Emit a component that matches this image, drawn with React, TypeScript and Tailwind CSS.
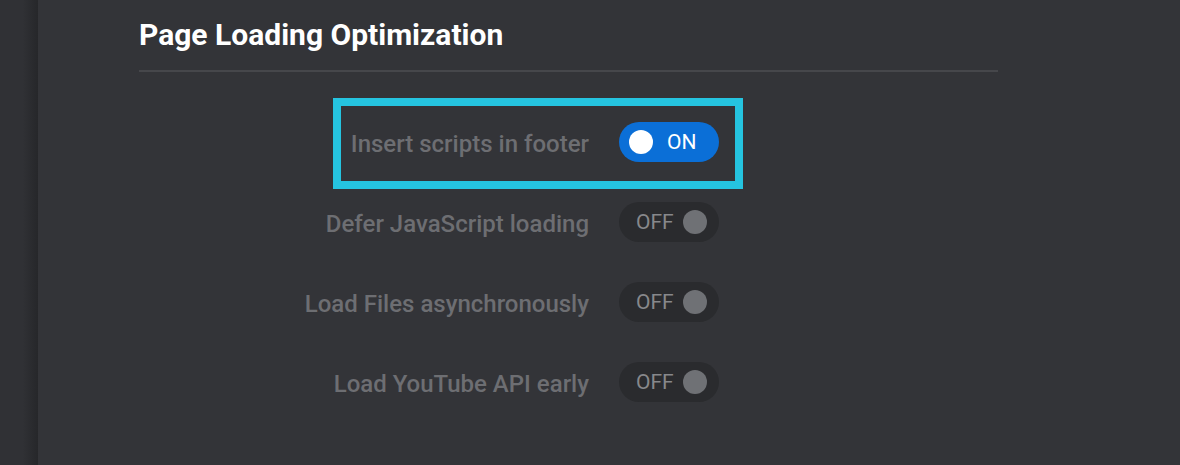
import React from "react";

function Toggle({ on }: { on: boolean }) {
  if (on) {
    return (
      <div className="flex h-[40px] w-[100px] shrink-0 items-center rounded-full bg-[#0b6fd7] pl-[10px]">
        <span className="h-[24px] w-[24px] rounded-full bg-white" />
        <span className="ml-[14px] mt-[1px] text-[21px] leading-none text-white">ON</span>
      </div>
    );
  }
  return (
    <div className="flex h-[40px] w-[100px] shrink-0 items-center rounded-full bg-[#2a2b2e] pl-[17px]">
      <span className="mt-[1px] text-[21px] leading-none text-[#87888b]">OFF</span>
      <span className="ml-[9px] h-[24px] w-[24px] rounded-full bg-[#6f7175]" />
    </div>
  );
}

const rows = [
  { label: "Insert scripts in footer", on: true },
  { label: "Defer JavaScript loading", on: false },
  { label: "Load Files asynchronously", on: false },
  { label: "Load YouTube API early", on: false },
];

export default function App() {
  return (
    <div
      className="flex h-[465px] w-[1180px] overflow-hidden bg-[#333438]"
      style={{ fontFamily: "Roboto, 'Noto Sans', sans-serif" }}
    >
      <div className="h-full w-[38px] shrink-0 bg-gradient-to-r from-[#303135] from-60% to-[#26272a]" />
      <div className="flex-1 pl-[101px] pt-[17px]">
        <h1 className="text-[30px] font-bold leading-[36px] text-white">Page Loading Optimization</h1>
        <div className="mt-[17px] h-[2px] w-[859px] bg-[#46474b]" />
        <div className="mt-[50px] flex flex-col gap-[40px]">
          {rows.map((r, i) => (
            <div key={r.label} className="relative flex h-[40px] items-center">
              <div className="mt-[3px] w-[450px] text-right text-[24px] font-medium leading-[40px] text-[#6d6e72]">{r.label}</div>
              <div className="ml-[30px]">
                <Toggle on={r.on} />
              </div>
              {i === 0 && (
                <div className="pointer-events-none absolute left-[194px] top-[-24px] h-[91px] w-[410px] border-[8px] border-[#25c4e0]" />
              )}
            </div>
          ))}
        </div>
      </div>
    </div>
  );
}
